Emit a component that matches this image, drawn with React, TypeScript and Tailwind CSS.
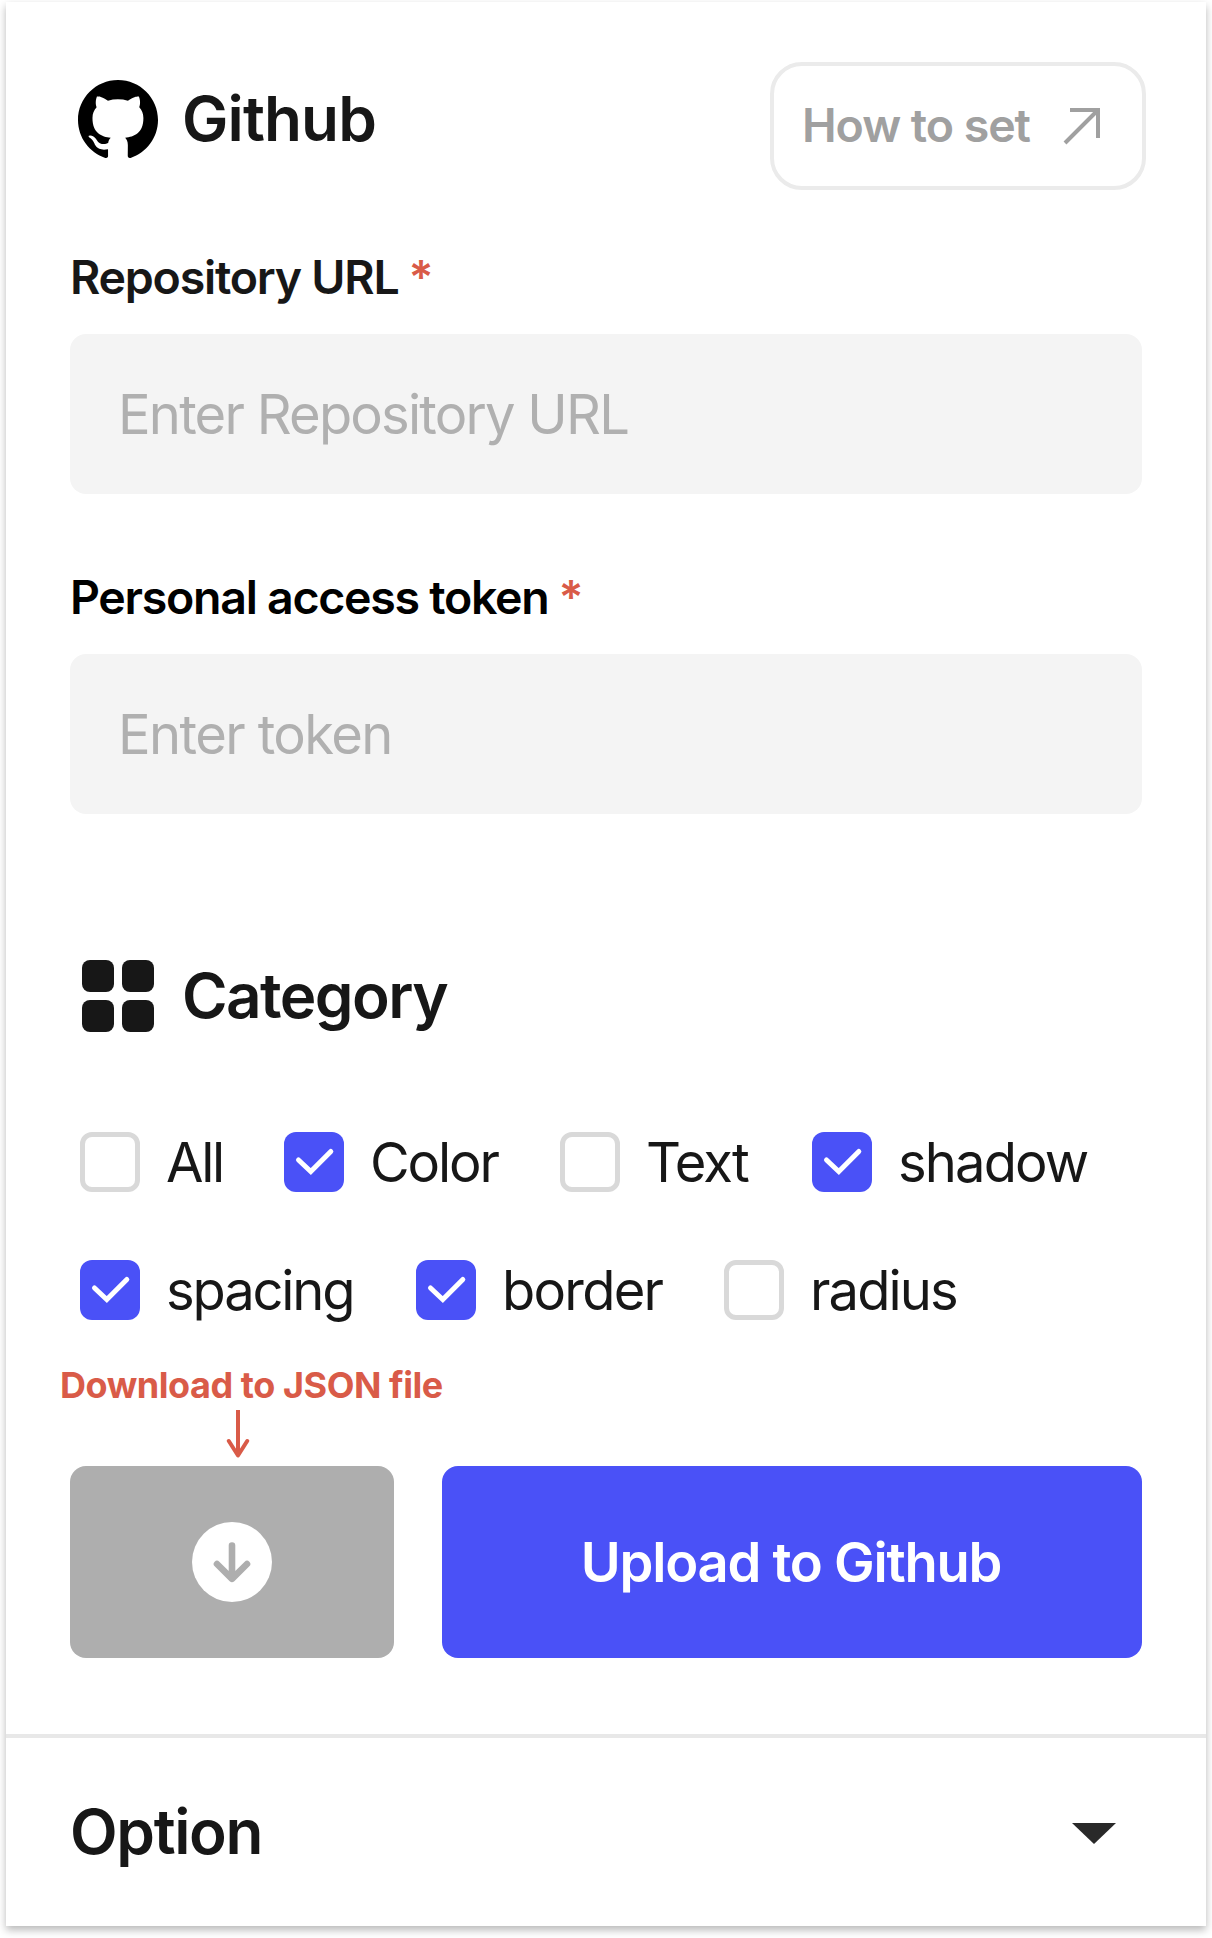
import { useState } from 'react';

type Category = { name: string; checked: boolean; width: string; tracking: string };

const firstRow: Category[] = [
  { name: 'All', checked: false, width: 'w-[204px]', tracking: 'tracking-[-2.3px]' },
  { name: 'Color', checked: true, width: 'w-[276px]', tracking: 'tracking-[-2.1px]' },
  { name: 'Text', checked: false, width: 'w-[252px]', tracking: 'tracking-[-2px]' },
  { name: 'shadow', checked: true, width: 'w-[290px]', tracking: 'tracking-[-1.85px]' },
];

const secondRow: Category[] = [
  { name: 'spacing', checked: true, width: 'w-[336px]', tracking: 'tracking-[-2.15px]' },
  { name: 'border', checked: true, width: 'w-[308px]', tracking: 'tracking-[-1.73px]' },
  { name: 'radius', checked: false, width: 'w-[260px]', tracking: 'tracking-[-1.89px]' },
];

function GithubMark() {
  return (
    <svg viewBox="0 0 24 24" className="-mt-[2px] size-20 shrink-0 fill-black">
      <path d="M12 .297c-6.63 0-12 5.373-12 12 0 5.303 3.438 9.8 8.205 11.385.6.113.82-.258.82-.577 0-.285-.01-1.04-.015-2.04-3.338.724-4.042-1.61-4.042-1.61C4.422 18.07 3.633 17.7 3.633 17.7c-1.087-.744.084-.729.084-.729 1.205.084 1.838 1.236 1.838 1.236 1.07 1.835 2.809 1.305 3.495.998.108-.776.417-1.305.76-1.605-2.665-.3-5.466-1.332-5.466-5.93 0-1.31.465-2.38 1.235-3.22-.135-.303-.54-1.523.105-3.176 0 0 1.005-.322 3.3 1.23.96-.267 1.98-.399 3-.405 1.02.006 2.04.138 3 .405 2.28-1.552 3.285-1.23 3.285-1.23.645 1.653.24 2.873.12 3.176.765.84 1.23 1.91 1.23 3.22 0 4.61-2.805 5.625-5.475 5.92.42.36.81 1.096.81 2.22 0 1.606-.015 2.896-.015 3.286 0 .315.21.69.825.57C20.565 22.092 24 17.592 24 12.297c0-6.627-5.373-12-12-12" />
    </svg>
  );
}

function GridIcon() {
  return (
    <svg viewBox="0 0 80 80" className="size-20 shrink-0 fill-[#171717]">
      <rect x="4" y="4" width="32" height="32" rx="8" />
      <rect x="44" y="4" width="32" height="32" rx="8" />
      <rect x="4" y="44" width="32" height="32" rx="8" />
      <rect x="44" y="44" width="32" height="32" rx="8" />
    </svg>
  );
}

function Field({
  label,
  labelClass,
  placeholder,
  inputClass,
}: {
  label: string;
  labelClass: string;
  placeholder: string;
  inputClass: string;
}) {
  return (
    <label className="block">
      <span className="flex h-14 items-center text-[46.5px] leading-[56px] font-semibold whitespace-nowrap">
        <span className={labelClass}>{label}</span>
        <span className="ml-[10px] text-[#d95b48]">*</span>
      </span>
      <input
        type="text"
        placeholder={placeholder}
        className={`mt-[29px] block h-40 w-full rounded-2xl bg-[#f4f4f4] px-12 text-[54.3px] text-[#171717] outline-none placeholder:text-[#b0b0b0] placeholder:opacity-100 ${inputClass}`}
      />
    </label>
  );
}

function CheckItem({ item }: { item: Category }) {
  const [on, setOn] = useState(item.checked);
  return (
    <button
      type="button"
      role="checkbox"
      aria-checked={on}
      onClick={() => setOn(!on)}
      className={`flex h-[60px] shrink-0 items-center gap-[26px] ${item.width}`}
    >
      {on ? (
        <span className="size-[60px] shrink-0 rounded-xl bg-[#4a51f7]">
          <svg viewBox="0 0 60 60" className="size-full">
            <path
              d="M14.5 28 L26.8 39.5 L46.8 19.5"
              fill="none"
              stroke="white"
              strokeWidth="5"
              strokeLinecap="round"
            />
          </svg>
        </span>
      ) : (
        <span className="size-[60px] shrink-0 rounded-xl border-[5px] border-[#d9d9d9] bg-white" />
      )}
      <span className={`text-[54.3px] leading-[60px] whitespace-nowrap ${item.tracking}`}>{item.name}</span>
    </button>
  );
}

export default function App() {
  return (
    <div className="h-[1938px] w-[1212px] overflow-hidden bg-white px-1.5 pt-0.5 font-['Inter',sans-serif] text-[#171717]">
      <main className="flex h-[1924px] flex-col bg-white shadow-[0_4px_8px_rgba(0,0,0,0.28)]">
        <section className="px-16 pt-[60px]">
          <header className="flex h-32 items-start justify-between">
            <div className="flex items-center gap-6 pt-[18px] pl-2">
              <GithubMark />
              <h1 className="-mt-px text-[62px] leading-[80px] font-semibold tracking-[-0.88px]">Github</h1>
            </div>
            <button
              type="button"
              className="-mr-1 flex h-32 w-[376px] items-center rounded-[32px] border-4 border-[#ebebeb] pl-7 text-[#a0a0a0]"
            >
              <span className="w-[259px] text-left text-[46.5px] font-semibold tracking-[-1.05px] whitespace-nowrap">
                How to set
              </span>
              <svg viewBox="0 0 44 44" className="size-11 shrink-0">
                <path
                  d="M9 6 H37 V34 M37 6 L4 39"
                  fill="none"
                  stroke="currentColor"
                  strokeWidth="4"
                />
              </svg>
            </button>
          </header>

          <div className="mt-[59px] flex flex-col gap-[75px]">
            <Field
              label="Repository URL"
              labelClass="tracking-[-1.23px]"
              placeholder="Enter Repository URL"
              inputClass="tracking-[-1.78px]"
            />
            <Field
              label="Personal access token"
              labelClass="tracking-[-1.28px] text-black"
              placeholder="Enter token"
              inputClass="tracking-[-1.6px]"
            />
          </div>

          <div className="mt-[142px] flex items-center gap-6 pl-2">
            <GridIcon />
            <h2 className="text-[62px] leading-[80px] font-semibold tracking-[-1.6px]">Category</h2>
          </div>

          <div className="mt-24 flex flex-col gap-[68px] pl-[10px]">
            <div className="flex">
              {firstRow.map((item) => (
                <CheckItem key={item.name} item={item} />
              ))}
            </div>
            <div className="flex">
              {secondRow.map((item) => (
                <CheckItem key={item.name} item={item} />
              ))}
            </div>
          </div>

          <div className="mt-[47px] -ml-[10px] text-[#d95b48]">
            <p className="text-[36px] leading-[36px] font-bold tracking-[-0.45px]">Download to JSON file</p>
            <svg viewBox="0 0 24 48" className="mt-[7px] ml-[166px] block h-12 w-6">
              <path d="M12 0 V45" fill="none" stroke="currentColor" strokeWidth="4" />
              <path
                d="M2.8 31 L12 45.5 L21.2 31"
                fill="none"
                stroke="currentColor"
                strokeWidth="4"
                strokeLinecap="round"
                strokeLinejoin="round"
              />
            </svg>
          </div>

          <div className="mt-2 flex h-48 gap-12">
            <button
              type="button"
              aria-label="Download JSON"
              className="flex w-[324px] items-center justify-center rounded-2xl bg-[#aeaeae]"
            >
              <span className="size-20 rounded-full bg-white">
                <svg viewBox="0 0 80 80" className="size-full">
                  <path
                    d="M40 23.5 V56 M25 42 L40 56.8 L55 42"
                    fill="none"
                    stroke="#aeaeae"
                    strokeWidth="6.6"
                    strokeLinecap="round"
                    strokeLinejoin="round"
                  />
                </svg>
              </span>
            </button>
            <button
              type="button"
              className="flex-1 rounded-2xl bg-[#4a51f7] pt-[2px] pr-[2px] text-[54.3px] font-semibold tracking-[-1.25px] text-white"
            >
              Upload to Github
            </button>
          </div>
        </section>

        <section className="mt-[76px] flex flex-1 items-center justify-between border-t-4 border-[#e8e8e8] pr-[90px] pl-16">
          <h2 className="-mt-px text-[62px] leading-[80px] font-semibold tracking-[-1.35px]">Option</h2>
          <svg viewBox="0 0 44 22" className="mt-1 h-[22px] w-11 fill-[#292929]">
            <path d="M0 0 H44 L22 21 Z" />
          </svg>
        </section>
      </main>
    </div>
  );
}
